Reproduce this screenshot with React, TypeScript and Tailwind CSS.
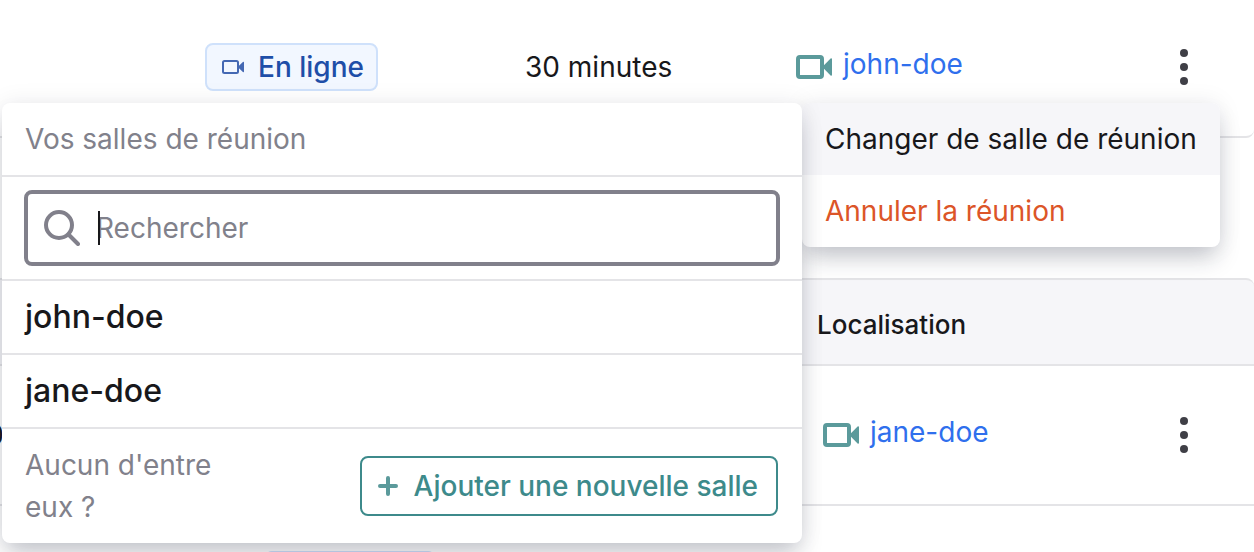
import type { ReactNode } from "react";

function CameraIcon({ className }: { className: string }) {
  return (
    <svg viewBox="0 0 36 24" className={className} fill="none" aria-hidden="true">
      <rect x="2" y="2" width="24" height="20" rx="2" stroke="currentColor" strokeWidth="4" />
      <path d="M27 11.2 34.6 3.4c.5-.5 1.4-.2 1.4.6v16c0 .8-.9 1.1-1.4.6L27 12.8Z" fill="currentColor" />
    </svg>
  );
}

function SmallCameraIcon() {
  return (
    <svg viewBox="0 0 22 14" className="h-3.5 w-[22px] text-[#4468b3]" fill="none" aria-hidden="true">
      <rect x="1" y="1" width="15" height="12" rx="1.5" stroke="currentColor" strokeWidth="2" />
      <path d="M16.5 6.3 20.9 2c.4-.4 1.1-.2 1.1.4v9.2c0 .6-.7.8-1.1.4l-4.4-4.3Z" fill="currentColor" />
    </svg>
  );
}

function MoreButton() {
  return (
    <button type="button" aria-label="Actions" className="ml-3 inline-flex p-1 align-middle text-[#3f3f46]">
      <svg viewBox="0 0 8 36" className="h-9 w-2" fill="currentColor" aria-hidden="true">
        <circle cx="4" cy="4" r="4" />
        <circle cx="4" cy="18" r="4" />
        <circle cx="4" cy="32" r="4" />
      </svg>
    </button>
  );
}

function RoomLink({ name }: { name: string }) {
  return (
    <a href="#salle" className="inline-flex items-center gap-[11px] align-middle leading-9 text-[#2f6fed]">
      <CameraIcon className="h-6 w-9 text-[#5b9a9b]" />
      <span className="pb-1.5">{name}</span>
    </a>
  );
}

function RoomOption({ children }: { children: ReactNode }) {
  return (
    <li className="border-b-2 border-[#e4e4e7]">
      <button type="button" className="block h-18 w-full px-[23px] text-left text-[32px] font-medium text-[#18181b]">
        {children}
      </button>
    </li>
  );
}

export default function App() {
  return (
    <div className="relative h-screen overflow-hidden bg-white font-['Inter',sans-serif] text-[28px] text-[#18181b]">
      <table className="w-full table-fixed border-separate border-spacing-0">
        <colgroup>
          <col className="w-[205px]" />
          <col className="w-80" />
          <col className="w-[271px]" />
          <col />
          <col className="w-[90px]" />
        </colgroup>
        <tbody>
          <tr className="h-[138px] *:border-b-2 *:border-[#e4e4e7] *:p-0 *:pb-0.5">
            <td />
            <td>
              <span className="inline-flex h-12 items-center gap-3.5 rounded-lg border-2 border-[#cfe1fb] bg-[#f2f7ff] pr-3 pl-[15px] align-middle font-medium text-[#1e4ea8]">
                <SmallCameraIcon />
                En ligne
              </span>
            </td>
            <td>30 minutes</td>
            <td>
              <span className="block pb-0.5">
                <RoomLink name="john-doe" />
              </span>
            </td>
            <td className="rounded-br-lg">
              <span className="block pb-0.5">
                <MoreButton />
              </span>
            </td>
          </tr>
        </tbody>
      </table>

      <table className="mt-[140px] w-full table-fixed border-separate border-spacing-0">
        <colgroup>
          <col className="w-[817px]" />
          <col />
          <col className="w-[90px]" />
        </colgroup>
        <thead>
          <tr className="h-22 *:border-y-2 *:border-[#e4e4e7] *:bg-[#f6f6f9] *:p-0">
            <td />
            <th scope="col" className="text-left text-[26px] font-medium">
              <span className="block pt-1">Localisation</span>
            </th>
            <td className="rounded-tr-lg" />
          </tr>
        </thead>
        <tbody>
          <tr className="h-[140px] *:border-b-2 *:border-[#e4e4e7] *:p-0">
            <td>
              <span className="flex w-1 justify-end">0</span>
            </td>
            <td>
              <span className="block pb-0.5 pl-1.5">
                <RoomLink name="jane-doe" />
              </span>
            </td>
            <td>
              <span className="block pb-0.5">
                <MoreButton />
              </span>
            </td>
          </tr>
        </tbody>
      </table>
      <div className="mt-[45px] ml-[264px] h-12 w-43 rounded-lg border-2 border-[#cfe1fb] bg-[#f2f7ff]" />

      <div className="absolute top-[103px] left-0.5 flex items-start">
        <section className="z-10 w-[800px] rounded-lg bg-white shadow-[0_0_24px_rgba(20,30,50,0.08),0_14px_24px_-4px_rgba(20,30,50,0.23)]">
          <h2 className="flex h-[74px] items-center border-b-2 border-[#e4e4e7] px-[23px] text-[#81818b]">
            Vos salles de réunion
          </h2>
          <div className="border-b-2 border-[#e4e4e7] px-[22px] py-[13px]">
            <label className="relative flex h-19 items-center gap-4 rounded-lg border-4 border-[#81808b] px-4 text-[#81808b]">
              <svg viewBox="0 0 36 36" className="size-9 shrink-0" fill="none" stroke="currentColor" aria-hidden="true">
                <circle cx="15" cy="15" r="13" strokeWidth="4" />
                <path d="m25 25 9 9" strokeWidth="4" strokeLinecap="round" />
              </svg>
              <input
                type="text"
                aria-label="Rechercher une salle"
                placeholder="Rechercher"
                className="min-w-0 flex-1 bg-transparent outline-none placeholder:text-[#81818b]"
              />
              <span className="absolute left-[70px] h-[34px] w-0.5 bg-[#18181b]" />
            </label>
          </div>
          <ul>
            <RoomOption>john-doe</RoomOption>
            <RoomOption>jane-doe</RoomOption>
          </ul>
          <div className="flex h-[114px] items-center justify-between pr-6 pl-[23px]">
            <p className="w-52 leading-[42px] text-[#81818b]">Aucun d'entre eux ?</p>
            <button
              type="button"
              className="flex h-15 items-center gap-4 rounded-lg border-2 border-[#3d8a8b] pr-[18px] pl-4 font-medium text-[#3d8a8b]"
            >
              <svg viewBox="0 0 20 20" className="size-5 text-[#5b9a9b]" stroke="currentColor" strokeWidth="4" strokeLinecap="round" aria-hidden="true">
                <path d="M10 2v16M2 10h16" />
              </svg>
              Ajouter une nouvelle salle
            </button>
          </div>
        </section>
        <div className="w-[418px] overflow-hidden rounded-lg bg-white whitespace-nowrap shadow-[0_0_24px_rgba(20,30,50,0.08),0_14px_24px_-4px_rgba(20,30,50,0.23)]">
          <button type="button" className="block h-18 w-full bg-[#f6f6f9] px-[23px] text-left">
            Changer de salle de réunion
          </button>
          <button type="button" className="block h-18 w-full px-[23px] text-left text-[#dc5528]">
            Annuler la réunion
          </button>
        </div>
      </div>
    </div>
  );
}
